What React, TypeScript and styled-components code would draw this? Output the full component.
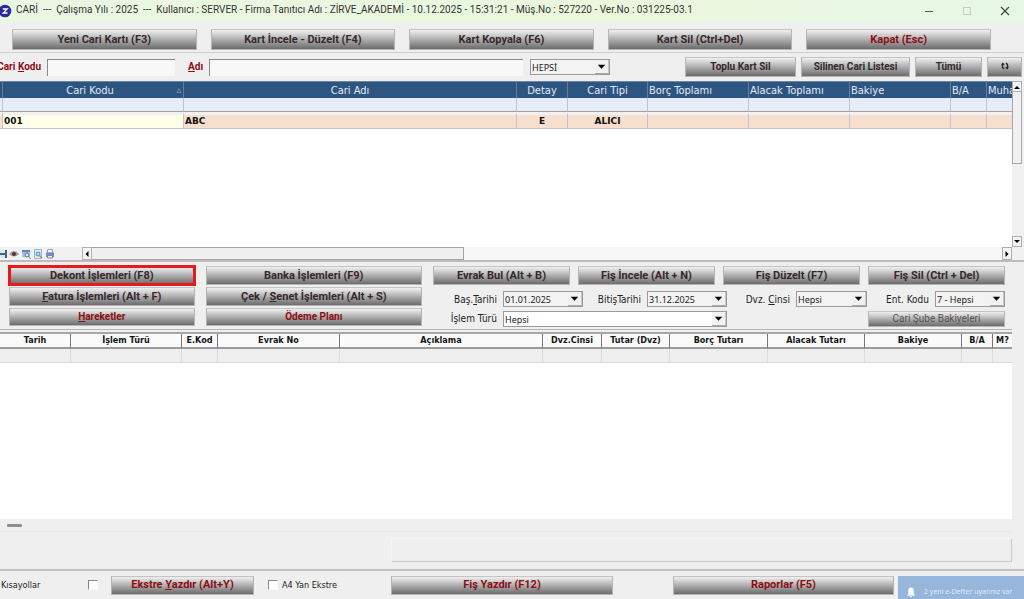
import React from "react";
import styled, { createGlobalStyle, css } from "styled-components";

const UI = `Roboto, "Noto Sans", sans-serif`;
const TAHOMA = `"DejaVu Sans Condensed", "DejaVu Sans", sans-serif`;

const Global = createGlobalStyle`
  *, *::before, *::after { box-sizing: border-box; }
  html, body { margin: 0; }
  body { background: #efefef; font: 10px/14px ${UI}; color: #222; overflow-x: hidden; }
  button, input, select { font: inherit; color: inherit; margin: 0; }
  u { text-underline-offset: 1px; }
`;

const Window = styled.div`
  display: flex;
  flex-direction: column;
  min-height: 100vh;
`;

const TitleBar = styled.header`
  display: flex;
  align-items: center;
  height: 22px;
  background: linear-gradient(90deg, #e9f7e3, #eaf7dd 60%, #e7f7e6);
  color: #333;
`;

const Logo = styled.svg`
  width: 12px;
  height: 14px;
  flex: none;
`;

const Title = styled.h1`
  flex: 1;
  margin: 0;
  padding-left: 4px;
  font: 400 10px/20px ${UI};
  white-space: pre;
  height: 22px;
`;

const WindowButton = styled.button`
  display: grid;
  place-items: center;
  width: 38px;
  height: 20px;
  padding: 0;
  border: 0;
  background: none;
`;

const MainBar = styled.nav`
  display: grid;
  grid-template-columns: repeat(5, 1fr);
  gap: 14px;
  height: 31px;
  padding: 7px 33px 2px 12px;
  border-bottom: 1px solid #cfcfcf;
`;

const Metal = styled.button<{ $red?: boolean; $size?: number; $width?: number; $muted?: boolean; $framed?: boolean }>`
  height: 100%;
  min-width: 0;
  width: ${p => (p.$width ? `${p.$width}px` : "auto")};
  padding: 0;
  border: 1px solid #b4b4b4;
  border-top-color: #c4c4c4;
  background: linear-gradient(#f0f0f0 0%, #d0d0d0 25%, #a0a0a0 60%, #6c6c6c 100%);
  color: ${p => (p.$red ? "#8a0d12" : p.$muted ? "#5a5054" : "#35282c")};
  font: ${p => (p.$muted ? 400 : 700)} ${p => p.$size ?? 11}px/14px ${UI};
  white-space: nowrap;
  ${p => p.$framed && css`outline: 3px solid #e8191c; outline-offset: -2px;`}
`;

const FilterBar = styled.form`
  display: flex;
  align-items: center;
  height: 28px;
  padding: 0 2px 0 0;
`;

const Caption = styled.label<{ $width: number }>`
  display: flex;
  justify-content: flex-end;
  flex: none;
  width: ${p => p.$width}px;
  padding-right: 6px;
  white-space: pre;
  overflow: hidden;
  color: #8a0d12;
  font-weight: 700;
`;

const Field = styled.input<{ $grow: number }>`
  flex: ${p => p.$grow} 1 0;
  min-width: 0;
  height: 17px;
  padding: 0 3px;
  border: 0;
  border-top: 1px solid #8a8a8a;
  border-left: 1px solid #8a8a8a;
  background: #f8f8f8;
  outline: 0;
`;

const FilterActions = styled.div`
  display: flex;
  gap: 5px;
  height: 20px;
  margin-left: 75px;
`;

const SelectFrame = styled.span<{ $width?: number; $white?: boolean }>`
  display: grid;
  grid-template-columns: 1fr 14px;
  align-items: center;
  width: ${p => (p.$width ? `${p.$width}px` : "100%")};
  height: 16px;
  border: 1px solid #9a9a9a;
  background: ${p => (p.$white ? "#fff" : "#f3f3f3")};
  color: #222;

  select {
    grid-area: 1 / 1 / 2 / 3;
    width: 100%;
    height: 14px;
    padding: 0 14px 0 1px;
    border: 0;
    outline: 0;
    appearance: none;
    background: none;
    font: 9px/13px "Noto Sans", sans-serif;
  }
  svg {
    grid-area: 1 / 2;
    width: 14px;
    height: 14px;
    background: #f2f2f2;
    border-bottom: 1px solid #a8a8a8;
    border-right: 1px solid #c8c8c8;
    pointer-events: none;
  }
`;

const GridArea = styled.section<{ $basis: number }>`
  display: flex;
  flex: 1 0 ${p => p.$basis}px;
  background: #fff;
`;

const GridScroll = styled.div`
  flex: 1;
  min-width: 0;
  overflow: hidden;
`;

const CariTable = styled.table`
  width: 100%;
  table-layout: fixed;
  border-collapse: separate;
  border-spacing: 0;

  th, td { padding: 0 1px; white-space: nowrap; overflow: hidden; border-right: 1px solid #c3c3c8; }
  th:last-child, td:last-child { border-right: 0; }
  th {
    height: 17px;
    border-right-color: #6a7d98;
    border-top: 1px solid #6f87a6;
    background: #2d5582;
    color: #e3eaf2;
    font: 400 11px/15px ${TAHOMA};
  }
  thead tr + tr td { height: 14px; background: #e6ecf8; border-bottom: 1px solid #a2a2a2; }
  tbody td {
    height: 17px;
    border-top: 3px solid #f1f1f1;
    border-bottom: 1px solid #cbc3bd;
    background: #f6dfcf;
    color: #111;
    font: 700 9px/13px "DejaVu Sans", sans-serif;
  }
  tbody td:nth-child(2) { background: #ffffe9; }
`;

const HeadCell = styled.th<{ $left?: boolean }>`
  text-align: ${p => (p.$left ? "left" : "center")};
`;

const SortMark = styled.svg`
  float: right;
  width: 6px;
  height: 15px;
`;

const Cell = styled.td<{ $center?: boolean }>`
  text-align: ${p => (p.$center ? "center" : "left")};
`;

const VScroll = styled.div`
  display: flex;
  flex-direction: column;
  justify-content: space-between;
  flex: none;
  width: 12px;
  padding-right: 2px;
  background: #f0f0f0;
`;

const ScrollButton = styled.button`
  display: grid;
  place-items: center;
  flex: none;
  width: 10px;
  height: 11px;
  padding: 0;
  border: 1px solid #b0b0b0;
  background: #f3f3f3;
`;

const VThumb = styled.div`
  height: 72px;
  border: 1px solid #a8a8a8;
  border-top: 0;
  background: #f0f0f0;
`;

const GridFooter = styled.div`
  display: flex;
  align-items: center;
  height: 15px;
  padding-right: 12px;
  border-bottom: 2px solid #bcbcbc;
  background: #f1f1f1;
`;

const IconStrip = styled.div`
  display: flex;
  gap: 2px;
  width: 82px;
  overflow: hidden;

  svg { width: 10px; height: 12px; flex: none; }
  svg:first-child { width: 7px; }
`;

const HTrack = styled.div`
  display: flex;
  flex: 1;
  height: 13px;
  background: #f7f7f7;

  ${ScrollButton} { height: 13px; }
`;

const HThumb = styled.div`
  width: 40%;
  margin-right: auto;
  border: 1px solid #a4a4a4;
  border-left: 0;
  background: #efefef;
`;

const ActionPanel = styled.section`
  display: grid;
  grid-template-columns: 413fr 572fr;
  column-gap: 11px;
  padding: 4px 19px 2px 9px;
  height: 67px;
`;

const LeftActions = styled.div`
  display: grid;
  grid-template-columns: 186fr 217fr;
  grid-template-rows: 19px 19px 18px;
  column-gap: 11px;
  row-gap: 2px;
`;

const RightActions = styled.div`
  display: grid;
  grid-template-rows: 19px 18px 16px;
  row-gap: 4px;
`;

const ButtonRow = styled.div`
  display: grid;
  grid-template-columns: 137fr 137fr 137fr 137fr;
  gap: 8px;
`;

const OptionRow = styled.div`
  display: grid;
  grid-template-columns: 70px 80px 64px 80px 69px 71px 68px 1fr;
  align-items: end;
`;

const OptionLabel = styled.label`
  padding-right: 6px;
  text-align: right;
  white-space: nowrap;
  font: 10px/14px ${TAHOMA};
`;

const TypeRow = styled.div`
  display: grid;
  grid-template-columns: 70px 224px 1fr 137px;
  align-items: center;
  height: 16px;

  > button { grid-column: 4; }
`;

const MoveTable = styled.table`
  width: 100%;
  table-layout: fixed;
  border-collapse: separate;
  border-spacing: 0;
  border-top: 2px solid #a6a6a6;

  th {
    height: 15px;
    padding: 0;
    overflow: hidden;
    white-space: nowrap;
    background: #fafafa;
    border-right: 1px solid #777;
    border-bottom: 2px solid #9a9a9a;
    color: #151515;
    font: 700 9px/13px "DejaVu Sans Condensed", "DejaVu Sans", sans-serif;
  }
  td { height: 14px; padding: 0; background: #efefef; border-right: 1px solid #dcdcdc; border-bottom: 1px solid #dcdcdc; }
  th:last-child, td:last-child { border-right: 0; }
`;

const Divider = styled.div`
  height: 3px;
  margin-right: 12px;
  border-top: 1px solid #b4b4b4;
`;

const Gutter = styled.div`
  flex: none;
  width: 12px;
  background: #efefef;
`;

const StatusStrip = styled.div`
  display: flex;
  align-items: center;
  height: 13px;
  padding-left: 7px;
  margin-right: 12px;
  border-bottom: 1px solid #e8e8e8;
`;

const Grip = styled.span`
  width: 15px;
  height: 3px;
  border-radius: 1px;
  background: #8e8e8e;
`;

const NoteArea = styled.div`
  height: 39px;
  padding: 6px 12px 7px 391px;
  border-bottom: 2px solid #c2c2c2;
`;

const NoteBox = styled.output`
  display: block;
  height: 24px;
  border: 1px solid #f6f6f6;
  border-bottom-color: #c9c9c9;
  border-right-color: #c9c9c9;
`;

const Footer = styled.footer`
  display: grid;
  grid-template-columns: 111px 143px 137px 222fr 60px 221fr 130px;
  align-items: center;
  height: 28px;

  > button { height: 19px; }
`;

const CheckLabel = styled.label<{ $after?: boolean }>`
  display: flex;
  align-items: center;
  justify-content: ${p => (p.$after ? "space-between" : "flex-start")};
  gap: 4px;
  padding: ${p => (p.$after ? "0 13px 0 1px" : "0 0 0 14px")};
  font: 9px/14px ${TAHOMA};
  white-space: nowrap;
`;

const Check = styled.input`
  appearance: none;
  width: 10px;
  height: 10px;
  border: 1px solid #fafafa;
  border-top-color: #888;
  border-left-color: #888;
  background: #fff;
`;

const Toast = styled.aside`
  display: flex;
  align-items: flex-end;
  gap: 9px;
  height: 23px;
  margin-left: 4px;
  padding: 0 0 1px 9px;
  align-self: end;
  background: #97b6dc;
  color: #dfe9f5;
  font: 7px/12px "Noto Sans", sans-serif;
  white-space: nowrap;
  overflow: hidden;

  svg { width: 8px; height: 12px; flex: none; }
`;

const Arrow = ({ d }: { d: string }) => (
  <svg width="6" height="6" viewBox="0 0 6 6"><path d={d} fill="#000" /></svg>
);

const Drop = ({ id, value, width, white, label }: { id: string; value: string; width?: number; white?: boolean; label?: string }) => (
  <SelectFrame $width={width} $white={white}>
    <select id={id} aria-label={label}><option>{value}</option></select>
    <svg viewBox="0 0 14 14"><path d="M3 5h8L7 9.500z" fill="#000" /></svg>
  </SelectFrame>
);

const cariColumns = [
  { name: "", width: 3 },
  { name: "Cari Kodu", width: 181, sort: true },
  { name: "Cari Adı" },
  { name: "Detay", width: 51 },
  { name: "Cari Tipi", width: 80 },
  { name: "Borç Toplamı", width: 101, left: true },
  { name: "Alacak Toplamı", width: 101, left: true },
  { name: "Bakiye", width: 101, left: true },
  { name: "B/A", width: 36, left: true },
  { name: "Muha", width: 25, left: true },
];
const cariRow = ["", "001", "ABC", "E", "ALICI", "", "", "", "", ""];

const moveColumns: [string, number?][] = [
  ["Tarih", 71], ["İşlem Türü", 111], ["E.Kod", 36], ["Evrak No", 122], ["Açıklama"], ["Dvz.Cinsi", 59],
  ["Tutar (Dvz)", 68], ["Borç Tutarı", 98], ["Alacak Tutarı", 97], ["Bakiye", 97], ["B/A", 31], ["M?", 19],
];

export default function App() {
  return (
    <Window>
      <Global />
      <TitleBar>
        <Logo viewBox="0 0 12 14">
          <circle cx="5" cy="7" r="6.300" fill="#2b2a9c" />
          <path d="M2.800 5h4.400L3.200 9h4.400" fill="none" stroke="#fff" strokeWidth="1.300" />
        </Logo>
        <Title>{"CARİ  ---  Çalışma Yılı : 2025  ---  Kullanıcı : SERVER - Firma Tanıtıcı Adı : ZİRVE_AKADEMİ - 10.12.2025 - 15:31:21 - Müş.No : 527220 - Ver.No : 031225-03.1"}</Title>
        <WindowButton aria-label="Simge durumuna küçült">
          <svg width="10" height="10"><path d="M1 5.500h8" stroke="#555" /></svg>
        </WindowButton>
        <WindowButton aria-label="Ekranı kapla" disabled>
          <svg width="10" height="10"><rect x="1.500" y="1.500" width="7" height="7" fill="none" stroke="#c3cfc0" /></svg>
        </WindowButton>
        <WindowButton aria-label="Pencereyi kapat">
          <svg width="10" height="10"><path d="M1 1l8 8M9 1l-8 8" stroke="#444" strokeWidth="1.200" /></svg>
        </WindowButton>
      </TitleBar>

      <MainBar>
        <Metal>Yeni Cari Kartı (F3)</Metal>
        <Metal>Kart İncele - Düzelt (F4)</Metal>
        <Metal>Kart Kopyala (F6)</Metal>
        <Metal>Kart Sil (Ctrl+Del)</Metal>
        <Metal $red>Kapat (Esc)</Metal>
      </MainBar>

      <FilterBar onSubmit={e => e.preventDefault()}>
        <Caption htmlFor="kod" $width={47}><span>Cari <u>K</u>odu</span></Caption>
        <Field id="kod" $grow={124} />
        <Caption htmlFor="adi" $width={34}><span><u>A</u>dı</span></Caption>
        <Field id="adi" $grow={314} />
        <Caption as="span" $width={7} />
        <Drop id="durum" label="Durum" value="HEPSİ" width={80} />
        <FilterActions>
          <Metal type="button" $size={10} $width={111}>Toplu Kart Sil</Metal>
          <Metal type="button" $size={10} $width={109}>Silinen Cari Listesi</Metal>
          <Metal type="button" $size={10} $width={67}>Tümü</Metal>
          <Metal type="button" $width={35} aria-label="Yenile">
            <svg width="8" height="8" viewBox="0 0 8 8">
              <path d="M1.500 3V5.500L3 7M6.500 5V2.500L5 1" fill="none" stroke="#222" strokeWidth="1.300" />
              <path d="M0 3.500L1.500.5 4 2.500zM8 4.500L6.500 7.500 4 5.500z" fill="#222" />
            </svg>
          </Metal>
        </FilterActions>
      </FilterBar>

      <GridArea $basis={166}>
        <GridScroll>
          <CariTable>
            <colgroup>{cariColumns.map((c, i) => <col key={i} width={c.width} />)}</colgroup>
            <thead>
              <tr>
                {cariColumns.map((c, i) => (
                  <HeadCell key={i} $left={c.left}>
                    {c.sort && <SortMark viewBox="0 0 6 15"><path d="M1 9.500h4L3 5.500z" fill="none" stroke="#6f84a3" /></SortMark>}
                    {c.name}
                  </HeadCell>
                ))}
              </tr>
              <tr>{cariColumns.map((_, i) => <td key={i} />)}</tr>
            </thead>
            <tbody>
              <tr>{cariRow.map((v, i) => <Cell key={i} $center={i > 2}>{v}</Cell>)}</tr>
            </tbody>
          </CariTable>
        </GridScroll>
        <VScroll>
          <div>
            <ScrollButton aria-label="Yukarı"><Arrow d="M0 5h6L3 2z" /></ScrollButton>
            <VThumb />
          </div>
          <ScrollButton aria-label="Aşağı"><Arrow d="M0 1h6L3 4z" /></ScrollButton>
        </VScroll>
      </GridArea>

      <GridFooter>
        <IconStrip>
          <svg viewBox="3 0 7 12"><path d="M1 2h9v8H1z" fill="#48607c" /><path d="M3 2h5v3H3zM3 7h5v3H3z" fill="#dce8f4" /></svg>
          <svg viewBox="0 0 10 12"><path d="M0 6q5-6 10 0q-5 5-10 0z" fill="#a89c94" /><circle cx="5" cy="6" r="2" fill="#4a3c3c" /></svg>
          <svg viewBox="0 0 10 12"><path d="M1 2h8v7H1z" fill="#a9c0de" /><path d="M1 2h8v2H1z" fill="#5f86bd" /><circle cx="6" cy="7" r="2" fill="#dfe9f5" stroke="#56749c" /><path d="M7.500 8.500L9.500 11" stroke="#56749c" /></svg>
          <svg viewBox="0 0 10 12"><path d="M1.500 1.500h7v9h-7z" fill="#e7f0fa" stroke="#8fb0d8" /><circle cx="5" cy="6" r="2" fill="#b9dcf5" stroke="#4c86bd" /><path d="M6.500 7.500L9 10" stroke="#b88a50" strokeWidth="1.500" /></svg>
          <svg viewBox="0 0 10 12"><path d="M2.500 1.500h5V5h-5z" fill="#f3f7fb" stroke="#8fa6c4" /><path d="M1 4.500h8V9H1z" fill="#6f8fbb" /><path d="M2.500 7.500h5v2.500h-5z" fill="#e4ecf7" stroke="#7a8aa4" /></svg>
        </IconStrip>
        <HTrack>
          <ScrollButton aria-label="Sola"><Arrow d="M4.500 0v6L1.500 3z" /></ScrollButton>
          <HThumb />
          <ScrollButton aria-label="Sağa"><Arrow d="M1.500 0v6L4.500 3z" /></ScrollButton>
        </HTrack>
      </GridFooter>

      <ActionPanel>
        <LeftActions>
          <Metal $framed>Dekont İşlemleri (F8)</Metal>
          <Metal>Banka İşlemleri (F9)</Metal>
          <Metal><u>F</u>atura İşlemleri (Alt + F)</Metal>
          <Metal>Çek / <u>S</u>enet İşlemleri (Alt + S)</Metal>
          <Metal $red $size={10}><u>H</u>areketler</Metal>
          <Metal $red $size={10}>Ödeme Planı</Metal>
        </LeftActions>
        <RightActions>
          <ButtonRow>
            <Metal>Evrak Bul (Alt + B)</Metal>
            <Metal>Fiş İncele (Alt + N)</Metal>
            <Metal>Fiş Düzelt (F7)</Metal>
            <Metal>Fiş Sil (Ctrl + Del)</Metal>
          </ButtonRow>
          <OptionRow>
            <OptionLabel htmlFor="bas">Baş.<u>T</u>arihi</OptionLabel>
            <Drop id="bas" value="01.01.2025" />
            <OptionLabel htmlFor="bitis">BitişTarihi</OptionLabel>
            <Drop id="bitis" value="31.12.2025" />
            <OptionLabel htmlFor="dvz">Dvz. <u>C</u>insi</OptionLabel>
            <Drop id="dvz" value="Hepsi" />
            <OptionLabel htmlFor="ent">Ent. Kodu</OptionLabel>
            <Drop id="ent" value="7 - Hepsi" />
          </OptionRow>
          <TypeRow>
            <OptionLabel htmlFor="tur">İşlem Türü</OptionLabel>
            <Drop id="tur" value="Hepsi" white />
            <Metal $muted $size={10}>Cari Şube Bakiyeleri</Metal>
          </TypeRow>
        </RightActions>
      </ActionPanel>

      <Divider />
      <GridArea $basis={187}>
        <GridScroll>
          <MoveTable>
            <colgroup>{moveColumns.map(([n, w]) => <col key={n} width={w} />)}</colgroup>
            <thead><tr>{moveColumns.map(([n]) => <th key={n}>{n}</th>)}</tr></thead>
            <tbody><tr>{moveColumns.map(([n]) => <td key={n} />)}</tr></tbody>
          </MoveTable>
        </GridScroll>
        <Gutter />
      </GridArea>

      <StatusStrip><Grip /></StatusStrip>
      <NoteArea><NoteBox /></NoteArea>

      <Footer>
        <CheckLabel $after>Kısayollar<Check type="checkbox" /></CheckLabel>
        <Metal $red><span>Ekstre <u>Y</u>azdır (Alt+Y)</span></Metal>
        <CheckLabel><Check type="checkbox" />A4 Yan Ekstre</CheckLabel>
        <Metal $red>Fiş Yazdır (F12)</Metal>
        <span />
        <Metal $red>Raporlar (F5)</Metal>
        <Toast>
          <svg viewBox="0 0 8 12"><path d="M4 1.500C2 1.500 1.300 3 1.300 5v2.500L0 9.500h8L6.700 7.500V5C6.700 3 6 1.500 4 1.500zM3 10h2v1H3z" fill="#fff" /></svg>
          <span>2 yeni e-Defter uyarınız var</span>
        </Toast>
      </Footer>
    </Window>
  );
}
